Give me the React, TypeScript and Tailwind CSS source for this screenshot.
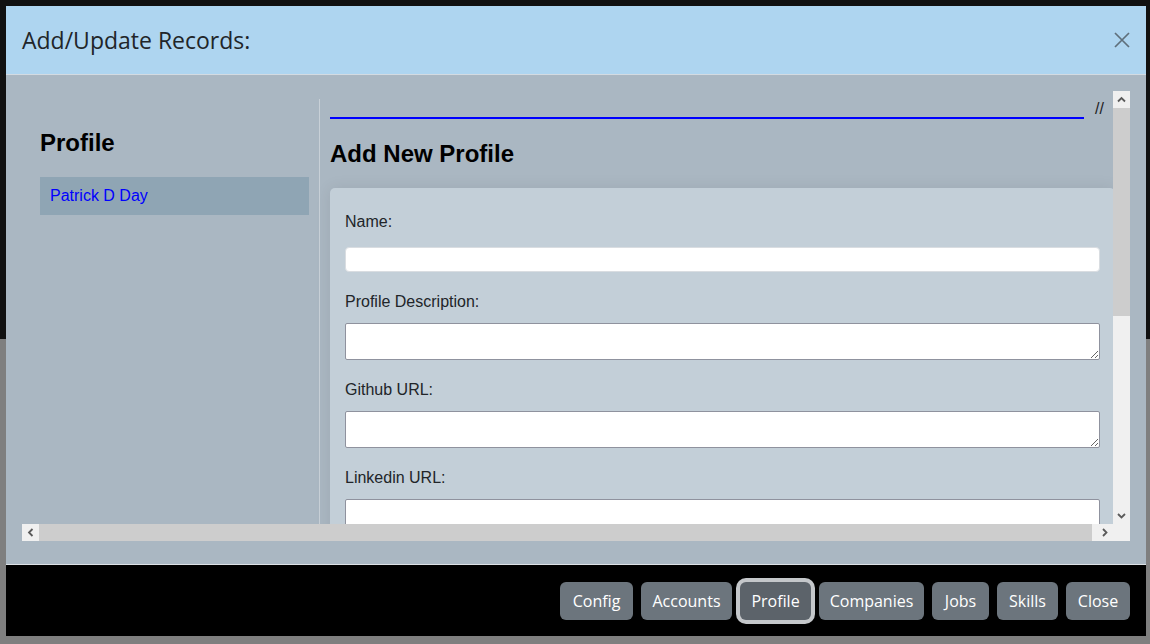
import React from 'react';

const arrow = '#5a5a5a';

const Chevron = ({ dir }: { dir: 'up' | 'down' | 'left' | 'right' }) => {
    const d = {
        up: 'M1 5.5 L4.5 2 L8 5.5',
        down: 'M1 2 L4.5 5.5 L8 2',
        left: 'M5.5 1 L2 4.5 L5.5 8',
        right: 'M2 1 L5.5 4.5 L2 8',
    }[dir];
    const w = dir === 'up' || dir === 'down' ? 9 : 7;
    const h = dir === 'up' || dir === 'down' ? 7 : 9;
    return (
        <svg width={w} height={h} viewBox={`0 0 ${w} ${h}`}>
            <path d={d} fill="none" stroke={arrow} strokeWidth="1.8" />
        </svg>
    );
};

const Field = ({ label, first, area }: { label: string; first?: boolean; area?: boolean }) => (
    <div className={first ? '' : 'mt-[18px]'}>
        <div className="text-[16px] leading-[24px] text-[#212529]">{label}</div>
        {area ? (
            <textarea className="mt-[9px] block w-full h-[37px] bg-white border border-[#8f929e] rounded-[2px] resize-y" />
        ) : (
            <input className="mt-[13px] block w-full h-[25px] bg-white border border-[#d9dde1] rounded-[4px]" />
        )}
    </div>
);

const buttons = [
    { label: 'Config', w: 'w-[73px]' },
    { label: 'Accounts', w: 'w-[91px]' },
    { label: 'Profile', w: 'w-[71px]', active: true },
    { label: 'Companies', w: 'w-[105px]' },
    { label: 'Jobs', w: 'w-[57px]' },
    { label: 'Skills', w: 'w-[61px]' },
    { label: 'Close', w: 'w-[64px]' },
];

export default function App() {
    return (
        <div className="w-[1150px] h-[644px] overflow-hidden bg-[linear-gradient(to_bottom,#111111_339px,#7f7f7f_339px)] pt-[6px] pl-[6px]">
            <div className="w-[1140px] h-[630px] flex flex-col bg-[#aab7c2]">
                {/* header */}
                <div className="h-[69px] shrink-0 flex items-center justify-between px-[16px] bg-[#aed5f0] border-b border-[#d3dbe2] font-['Open_Sans',sans-serif]">
                    <h4 className="text-[23px] leading-[36px] text-[#212529]">Add/Update Records:</h4>
                    <svg width="16" height="16" viewBox="0 0 16 16">
                        <path d="M1 1 L15 15 M15 1 L1 15" stroke="#5f6f7b" strokeWidth="1.7" />
                    </svg>
                </div>

                {/* body */}
                <div className="h-[489px] shrink-0 px-[16px] pt-[16px] font-['Liberation_Sans',Arial,sans-serif]">
                    <div className="grid grid-cols-[1fr_17px] grid-rows-[433px_17px] h-[450px]">
                        <div className="overflow-hidden flex">
                            <div className="w-[297px] shrink-0 pl-[18px] pr-[10px] pt-[37px]">
                                <h3 className="text-[24px] leading-[29px] font-bold text-black">Profile</h3>
                                <div className="mt-[20px] bg-[#8fa5b4] px-[10px] py-[7px] text-[16px] leading-[24px] text-[#0000ff]">
                                    Patrick D Day
                                </div>
                            </div>
                            <div className="w-[796px] shrink-0 mt-[8px] border-l border-[#c8d0d7] pl-[10px]">
                                <div className="flex items-start">
                                    <div className="flex-1 mt-[18px] h-[2px] bg-[#0000ff]" />
                                    <span className="ml-[11px] mr-[11px] mt-[2px] text-[16px] leading-[16px] text-[#222]">//</span>
                                </div>
                                <h2 className="mt-[20px] text-[24px] leading-[29px] font-bold text-black">Add New Profile</h2>
                                <div className="mt-[20px] bg-[#c3cfd8] rounded-tl-[5px] rounded-tr-[5px] px-[15px] pt-[22px] pb-[60px] shadow-[0_0_16px_rgba(0,0,0,0.08)]">
                                    <Field label="Name:" first />
                                    <Field label="Profile Description:" area />
                                    <Field label="Github URL:" area />
                                    <Field label="Linkedin URL:" area />
                                </div>
                            </div>
                        </div>

                        {/* vertical scrollbar */}
                        <div className="flex flex-col bg-[#f0f0f0]">
                            <div className="h-[17px] flex items-center justify-center">
                                <Chevron dir="up" />
                            </div>
                            <div className="h-[208px] bg-[#cdcdcd]" />
                            <div className="flex-1" />
                            <div className="h-[17px] flex items-center justify-center">
                                <Chevron dir="down" />
                            </div>
                        </div>

                        {/* horizontal scrollbar */}
                        <div className="flex bg-[#f0f0f0]">
                            <div className="w-[17px] flex items-center justify-center">
                                <Chevron dir="left" />
                            </div>
                            <div className="flex-1 bg-[#cdcdcd]" />
                            <div className="w-[4px]" />
                            <div className="w-[17px] flex items-center justify-center">
                                <Chevron dir="right" />
                            </div>
                        </div>
                        <div className="bg-[#f0f0f0]" />
                    </div>
                </div>

                {/* footer */}
                <div className="h-[72px] shrink-0 flex items-center justify-end gap-[8px] pr-[16px] bg-black border-t border-[#dde2e6] font-['Open_Sans',sans-serif]">
                    {buttons.map((b) => (
                        <button
                            key={b.label}
                            className={`${b.w} h-[38px] rounded-[6px] text-[16px] text-white ${b.active ? 'bg-[#5c636a] shadow-[0_0_0_4px_#c4c7ca]' : 'bg-[#6c757d]'}`}
                        >
                            {b.label}
                        </button>
                    ))}
                </div>
            </div>
        </div>
    );
}
